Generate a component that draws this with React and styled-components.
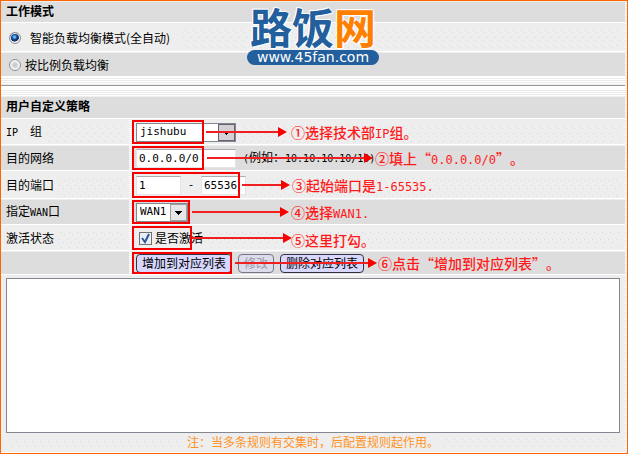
import React, { useState } from "react";
import styled, { createGlobalStyle, css } from "styled-components";

const GlobalStyle = createGlobalStyle`
  * {
    box-sizing: border-box;
  }
  body {
    margin: 0;
    background: #fff;
    color: #000;
    font-family: "Noto Sans CJK SC", sans-serif;
    font-size: 12px;
    line-height: 16px;
    text-spacing-trim: space-all;
  }
  input, select, button, textarea {
    font: inherit;
    color: inherit;
    margin: 0;
  }
`;

const dots = `url("data:image/svg+xml,%3Csvg xmlns='http://www.w3.org/2000/svg' width='8' height='15' fill='%23d9d9d9' shape-rendering='crispEdges'%3E%3Cpath d='M2 1h1v1h-1zM5 3h1v1h-1zM0 8h1v1h-1zM4 11h1v1h-1z'/%3E%3C/svg%3E")`;

const stripes = "repeating-linear-gradient(#fff 0 1px, #ebebeb 1px 2px)";

const Page = styled.main`
  position: relative;
  border: 1px solid #ff6600;
  padding-right: 2px;
  background: ${stripes};
`;

const Row = styled.div`
  display: flex;
  min-height: ${(p) => p.$h}px;
  border-top: 1px solid #eee;
  border-bottom: 1px solid #fff;
  background: ${(p) => (p.$dark ? "#ddd" : "#eee")};
`;

const SplitRow = styled(Row)`
  display: grid;
  grid-template-columns: 128px 3px 1fr;
`;

const Title = styled.h2`
  margin: 0;
  padding: 0 5px;
  font-size: 12px;
  line-height: 18px;
`;

const ModeLabel = styled.label`
  display: flex;
  align-items: center;
  gap: ${(p) => p.$gap}px;
  padding: 0 8px;
`;

const Radio = styled.input`
  appearance: none;
  width: 12px;
  height: 12px;
  border: 1px solid #8e8f8f;
  border-radius: 50%;
  background: radial-gradient(circle, #c8ccd0 20%, #f4f4f4 60%);
  box-shadow: inset 0 0 0 1px #f4f4f4;
  &:checked {
    background: radial-gradient(circle at 45% 40%, #6fc0ee 0 10%, #0d4a98 30%, #0b2a5c 52%, #e8e8e8 60%);
  }
`;

const Dots = styled.span`
  flex: 1;
  margin: 5px 5px 2px;
  background: ${dots};
`;

const Divider = styled.hr`
  height: 19px;
  margin: 0;
  border: 0;
  background: linear-gradient(transparent 8px, #999 8px 9px, #fff 9px 12px, transparent 12px);
`;

const Name = styled.div`
  display: flex;
  align-items: center;
  padding-left: 5px;
  white-space: pre;
  ${Dots} {
    align-self: stretch;
  }
`;

const Gutter = styled.div`
  background: ${stripes};
`;

const Cell = styled.div`
  position: relative;
  display: flex;
  align-items: center;
  padding-left: 4px;
  white-space: nowrap;
  ${Dots} {
    align-self: stretch;
  }
`;

const Half = styled.span`
  font-family: "DejaVu Sans Mono", monospace;
  font-size: 10px;
`;

const fieldText = css`
  font-family: "DejaVu Sans Mono", monospace;
  font-size: 11px;
`;

const TextInput = styled.input`
  ${fieldText}
  width: ${(p) => p.$w}px;
  height: 19px;
  padding: 0 2px;
  border: 1px solid #e3e3ea;
  border-top-color: #abadb3;
  background: #fff;
`;

const SelectBox = styled.span`
  position: relative;
  display: inline-flex;
  width: ${(p) => p.$w}px;
  height: 19px;
  select {
    ${fieldText}
    appearance: none;
    width: 100%;
    padding: 0 3px;
    border: 1px solid #828790;
    border-radius: 0;
    background: #fff;
  }
  svg {
    position: absolute;
    top: 1px;
    right: 1px;
    pointer-events: none;
  }
`;

const Dash = styled.span`
  width: 20px;
  text-align: center;
  ${fieldText}
`;

const Example = styled.span`
  padding-left: 7px;
`;

const CheckLabel = styled.label`
  display: flex;
  align-items: center;
  gap: 3px;
  padding-left: 3px;
`;

const Check = styled.input`
  appearance: none;
  width: 13px;
  height: 13px;
  border: 1px solid #707070;
  background: #e9eff5;
  &:checked {
    background: #e9eff5
      url("data:image/svg+xml,%3Csvg xmlns='http://www.w3.org/2000/svg' viewBox='0 0 11 11'%3E%3Cpath d='M2 5l3 4 4-8' fill='none' stroke='%2331549c' stroke-width='2'/%3E%3C/svg%3E");
  }
`;

const Button = styled.button`
  height: 19px;
  padding: 0 5px;
  border: 1px solid #333344;
  border-radius: 4px;
  background: #d8d8ff;
  line-height: 16px;
  & + & {
    margin-left: 6px;
  }
  &:disabled {
    border-color: #77778a;
    background: #dcdcec;
    color: #9a9aa8;
  }
`;

/* red walkthrough marks lying over the form */
const Frame = styled.span`
  position: absolute;
  left: 0;
  top: 0;
  bottom: 0;
  width: ${(p) => p.$w}px;
  border: 2px solid #f60000;
  pointer-events: none;
`;

const Arrow = styled.span`
  position: absolute;
  left: ${(p) => p.$from}px;
  width: ${(p) => p.$to - p.$from}px;
  top: calc(50% - 1px);
  height: 2px;
  background: linear-gradient(90deg, #f02020 calc(100% - 6px), transparent 0);
  pointer-events: none;
  &::after {
    content: "";
    position: absolute;
    right: 0;
    top: -4px;
    border: 5px solid transparent;
    border-left: 9px solid #f60000;
    border-right: 0;
  }
`;

const Tip = styled.span`
  position: absolute;
  left: ${(p) => p.$x}px;
  top: calc(50% - ${(p) => (p.$low ? 8 : 10)}px);
  color: #ff1a1a;
  font-size: 14px;
  font-weight: 500;
  line-height: 20px;
  pointer-events: none;
  b {
    font-family: "DejaVu Sans Mono", monospace;
    font-size: 12px;
    font-weight: 400;
  }
`;

const ListArea = styled.div`
  padding: 3px 5px 0;
  background: #eee;
  border-bottom: 1px solid #fff;
`;

const RuleList = styled.textarea`
  display: block;
  width: 100%;
  height: 155px;
  border: 1px solid #828790;
  background: #fff;
  resize: none;
`;

const Footnote = styled.p`
  display: flex;
  margin: 0;
  color: #ff9326;
  line-height: 17px;
  padding-bottom: 2px;
`;

const Logo = styled.div`
  position: absolute;
  top: 3px;
  left: 50%;
  width: 132px;
  margin-left: -67px;
`;

const LogoName = styled.div`
  color: #225f9c;
  font-size: 42px;
  font-weight: 700;
  line-height: 43px;
  text-align: center;
  white-space: nowrap;
  text-shadow: 1px 0 #fff, -1px 0 #fff, 0 1px #fff, 0 -1px #fff, 1px 1px #fff, -1px -1px #fff;
  span {
    color: #ff8000;
  }
`;

const LogoUrl = styled.div`
  position: relative;
  height: 15px;
  margin-top: 3px;
  border-radius: 8px;
  background: #225f9c;
  color: #fff;
  font-family: "DejaVu Sans", sans-serif;
  font-size: 14px;
  line-height: 14px;
  text-align: center;
`;

const DropIcon = ({ plain }) => (
  <svg width="17" height="17" viewBox="0 0 17 17" shapeRendering="crispEdges">
    <rect x="0.5" y="0.5" width="16" height="16" fill={plain ? "#e6e6e6" : "#d4d0d6"} stroke={plain ? "#a0a0a0" : "#6b6070"} />
    {plain ? <path d="M5 7h7v1h-1v1h-1v1h-1v1H8v-1H7V9H6V8H5z" /> : <path d="M6 8h5v1h-1v1H9v1H8v-1H7V9H6z" />}
  </svg>
);

const Field = ({ name, h, dark, frame, arrow, tip, tipX, low, children }) => (
  <SplitRow $h={h} $dark={dark}>
    <Name>
      {name}
      {!dark && <Dots />}
    </Name>
    <Gutter />
    <Cell>
      {children}
      {!dark && <Dots />}
      <Frame $w={frame} />
      <Arrow $from={arrow[0]} $to={arrow[1]} />
      <Tip $x={tipX} $low={low}>{tip}</Tip>
    </Cell>
  </SplitRow>
);

const App = () => {
  const [mode, setMode] = useState("auto");
  const [active, setActive] = useState(true);

  return (
    <>
      <GlobalStyle />
      <Page>
        <Row $h={22} $dark>
          <Title>工作模式</Title>
        </Row>
        <Row $h={29}>
          <ModeLabel $gap={9}>
            <Radio type="radio" name="mode" checked={mode === "auto"} onChange={() => setMode("auto")} />
            智能负载均衡模式(全自动)
          </ModeLabel>
          <Dots />
        </Row>
        <Row $h={25} $dark>
          <ModeLabel $gap={4}>
            <Radio type="radio" name="mode" checked={mode === "ratio"} onChange={() => setMode("ratio")} />
            按比例负载均衡
          </ModeLabel>
        </Row>
        <Divider />
        <Row $h={23} $dark>
          <Title>用户自定义策略</Title>
        </Row>

        <Field
          name={<label htmlFor="group"><Half>IP</Half>{"\u3000组"}</label>}
          h={26}
          frame={72}
          arrow={[74, 155]}
          tipX={159}
          tip={<>①选择技术部<b>IP</b>组。</>}
        >
          <SelectBox $w={100}>
            <select id="group" defaultValue="jishubu">
              <option>jishubu</option>
            </select>
            <DropIcon />
          </SelectBox>
        </Field>
        <Field
          name={<label htmlFor="network">目的网络</label>}
          h={26}
          dark
          frame={72}
          arrow={[75, 241]}
          tipX={243}
          tip={<>②填上“<b>0.0.0.0/0</b>”。</>}
        >
          <TextInput id="network" $w={100} defaultValue="0.0.0.0/0" />
          <Example>
            <Half>(</Half>例如：<Half>10.10.10.10/10)</Half>
          </Example>
        </Field>
        <Field
          name={<label htmlFor="port">目的端口</label>}
          h={28}
          frame={108}
          arrow={[110, 158]}
          tipX={160}
          tip={<>③起始端口是<b>1-65535.</b></>}
        >
          <TextInput id="port" $w={45} defaultValue="1" />
          <Dash>-</Dash>
          <TextInput aria-label="结束端口" $w={45} defaultValue="65536" />
        </Field>
        <Field
          name={<label htmlFor="wan">指定<Half>WAN</Half>口</label>}
          h={26}
          dark
          frame={58}
          arrow={[60, 157]}
          tipX={159}
          tip={<>④选择<b>WAN1.</b></>}
        >
          <SelectBox $w={52}>
            <select id="wan" defaultValue="WAN1">
              <option>WAN1</option>
            </select>
            <DropIcon plain />
          </SelectBox>
        </Field>
        <Field
          name="激活状态"
          h={26}
          frame={60}
          arrow={[60, 160]}
          tipX={159}
          low
          tip="⑤这里打勾。"
        >
          <CheckLabel>
            <Check type="checkbox" checked={active} onChange={(e) => setActive(e.target.checked)} />
            是否激活
          </CheckLabel>
        </Field>
        <Field
          name=""
          h={24}
          dark
          frame={100}
          arrow={[103, 245]}
          tipX={246}
          tip="⑥点击“增加到对应列表”。"
        >
          <Button type="button">增加到对应列表</Button>
          <Button type="button" disabled>修改</Button>
          <Button type="button">删除对应列表</Button>
        </Field>

        <ListArea>
          <RuleList aria-label="对应列表" readOnly />
          <Footnote>
            <Dots />
            注：当多条规则有交集时，后配置规则起作用。
            <Dots />
          </Footnote>
        </ListArea>

        <Logo>
          <LogoName>路饭<span>网</span></LogoName>
          <LogoUrl>www.45fan.com</LogoUrl>
        </Logo>
      </Page>
    </>
  );
};

export default App;
